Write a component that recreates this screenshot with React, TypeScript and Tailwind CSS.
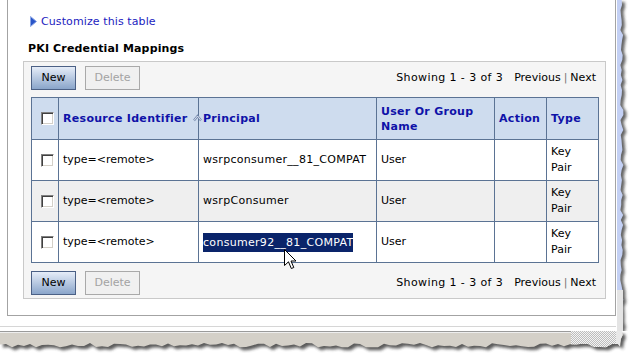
import React from 'react'

// simple seeded jitter for the torn paper edge
function jag(n: number, seed: number, lo: number, hi: number) {
  let s = seed
  const out: number[] = []
  for (let i = 0; i < n; i++) {
    s = (s * 9301 + 49297) % 233280
    out.push(lo + (s / 233280) * (hi - lo))
  }
  return out
}

function RightEdge() {
  const h = 331
  const xs = jag(Math.ceil(h / 5) + 1, 7, 4, 7.5)
  const pts = xs.map((x, i) => `${x.toFixed(1)},${Math.min(i * 5, h)}`).join(' L')
  const d = `M0,0 L${pts} L0,${h} Z`
  return (
    <svg width="22" height={h} className="block shrink-0">
      <defs>
        <filter id="rs" x="-50%" y="-10%" width="200%" height="120%">
          <feGaussianBlur stdDeviation="1.4" />
        </filter>
      </defs>
      <path d={d} transform="translate(3,2)" fill="#3a3a3a" opacity="0.8" filter="url(#rs)" />
      <path d={d} fill="#c3d0f4" />
      <rect x="0" y="0" width="1" height={h} fill="#ffffff" />
      <rect x="1" y="290" width="6" height={h - 290} fill="#e4e4e4" />
    </svg>
  )
}

function BottomEdge() {
  const xs = jag(Math.ceil(622 / 6) + 1, 3, 12, 16.5)
  const rs = jag(4, 11, 4, 7)
  let d = 'M0,0 L616,0'
  rs.forEach((x, i) => {
    d += ` L${(616 + x).toFixed(1)},${i * 4}`
  })
  for (let i = xs.length - 1; i >= 0; i--) {
    d += ` L${Math.min(i * 6, 620)},${xs[i].toFixed(1)}`
  }
  d += ' Z'
  return (
    <svg width="638" height="30" className="block">
      <defs>
        <filter id="bs" x="-10%" y="-50%" width="120%" height="250%">
          <feGaussianBlur stdDeviation="1.5" />
        </filter>
        <pattern id="dots" width="2" height="2" patternUnits="userSpaceOnUse">
          <rect width="2" height="2" fill="#f4f4f4" />
          <rect width="1" height="1" fill="#bdbdbd" />
          <rect x="1" y="1" width="1" height="1" fill="#bdbdbd" />
        </pattern>
        <clipPath id="bc">
          <path d={d} />
        </clipPath>
      </defs>
      <path d={d} transform="translate(3,3)" fill="#333" opacity="0.8" filter="url(#bs)" />
      <path d={d} fill="#d4d0c8" />
      <g clipPath="url(#bc)">
        <rect x="0" y="0" width="616" height="1" fill="#9a9a9a" />
        <rect x="0" y="1" width="616" height="1" fill="#eeeeee" />
        <rect x="571" y="0" width="45" height="30" fill="url(#dots)" />
        <rect x="616" y="0" width="10" height="30" fill="#e8e8e8" />
      </g>
    </svg>
  )
}

function Checkbox() {
  return (
    <div className="w-[13px] h-[13px] bg-white border border-t-[#808080] border-l-[#808080] border-b-[#ffffff] border-r-[#ffffff] shadow-[inset_1px_1px_0_#404040,inset_-1px_-1px_0_#d4d0c8]" />
  )
}

function Toolbar() {
  return (
    <div className="h-[24px] flex items-center justify-between">
      <div className="flex gap-[9px]">
        <button className="w-[45px] h-[24px] border border-[#4b6085] bg-gradient-to-b from-[#e6edf8] to-[#8aa5ca] text-black text-[11px]">
          New
        </button>
        <button className="w-[55px] h-[24px] border border-[#a9a9a9] bg-[#f0f0f0] text-[#a3a3a3] text-[11px]">
          Delete
        </button>
      </div>
      <div className="pr-[3px] flex items-center text-[11px] text-black whitespace-nowrap">
        <span className="tracking-[0.4px]">Showing 1 - 3 of 3</span>
        <span className="ml-[11px]">Previous</span>
        <span className="mx-[3px] text-[#777]">|</span>
        <span>Next</span>
      </div>
    </div>
  )
}

const rows = [
  { id: 'type=<remote>', principal: 'wsrpconsumer__81_COMPAT', who: 'User', bg: 'bg-white' },
  { id: 'type=<remote>', principal: 'wsrpConsumer', who: 'User', bg: 'bg-[#efefef]' },
  { id: 'type=<remote>', principal: 'consumer92__81_COMPAT', who: 'User', bg: 'bg-white', selected: true },
]

const cell = 'border-r border-b border-[#5b7394] flex items-center pl-[4px] whitespace-nowrap'
const head = 'border-r border-b border-[#5b7394] bg-[#cedcee] flex items-center pl-[4px] text-[#0f12a8] font-bold tracking-[0.3px] leading-[15px] whitespace-nowrap'

export default function App() {
  return (
    <div className="w-[638px] h-[361px] overflow-hidden bg-white font-['DejaVu_Sans',sans-serif] text-[11px] text-black">
      <div className="flex">
        <div className="w-[616px] h-[331px] flex flex-col">
          <div className="ml-[7px] w-[609px] h-[316px] border-l border-r border-b border-[#a3a3a3] flex flex-col">
            <div className="mt-[15px] ml-[22px] h-[13px] flex items-center">
              <svg width="7" height="11" viewBox="0 0 7 11">
                <path d="M0.5,0.5 L6.5,5.5 L0.5,10.5 Z" fill="#2a55c8" stroke="#8aa6e6" strokeWidth="1" />
              </svg>
              <span className="ml-[4px] text-[#1c1cc0] leading-[13px] tracking-[0.1px]">Customize this table</span>
            </div>
            <div className="mt-[14px] ml-[20px] font-bold tracking-[0.15px] leading-[14px]">PKI Credential Mappings</div>

            <div className="mt-[5px] ml-[15px] w-[583px] h-[238px] border border-[#c9c9c9] bg-[#f5f5f5] pl-[7px] pr-[6px] pt-[4px] flex flex-col">
              <Toolbar />

              <div className="mt-[7px] grid grid-cols-[27px_140px_178px_118px_52px_52px] grid-rows-[42px_41px_41px_41px] border-t border-l border-[#5b7394]">
                <div className={`${head} justify-center pl-0`}>
                  <Checkbox />
                </div>
                <div className={`${head} relative`}>
                  <span>Resource Identifier</span>
                  <svg width="9" height="8" viewBox="0 0 9 8" className="absolute left-[134px] top-[16px] z-10">
                    <path d="M1,6.5 L4.5,2 L8,6.5" fill="none" stroke="#7287ab" strokeWidth="2.2" />
                    <path d="M1,6.5 L4.5,2 L8,6.5" fill="none" stroke="#eef3fb" strokeWidth="0.8" />
                  </svg>
                </div>
                <div className={head}>Principal</div>
                <div className={head}>
                  <span>
                    User Or Group
                    <br />
                    Name
                  </span>
                </div>
                <div className={head}>Action</div>
                <div className={head}>Type</div>

                {rows.map((r, i) => (
                  <React.Fragment key={i}>
                    <div className={`${cell} ${r.bg} justify-center pl-0`}>
                      <Checkbox />
                    </div>
                    <div className={`${cell} ${r.bg}`}>{r.id}</div>
                    <div className={`${cell} ${r.bg} relative tracking-[0.3px]`}>
                      {r.selected ? (
                        <>
                          <span className="inline-block bg-[#0a246a] text-white leading-[19px]">{r.principal}</span>
                          <svg width="13" height="21" viewBox="0 0 13 21" className="absolute left-[85px] top-[27px]">
                            <path
                              d="M0.5,0.5 L0.5,16.5 L4.5,12.8 L7.3,19.5 L9.8,18.5 L7,12 L12,12 Z"
                              fill="#ffffff"
                              stroke="#000000"
                              strokeWidth="1"
                              strokeLinejoin="miter"
                            />
                          </svg>
                        </>
                      ) : (
                        r.principal
                      )}
                    </div>
                    <div className={`${cell} ${r.bg}`}>{r.who}</div>
                    <div className={`${cell} ${r.bg}`} />
                    <div className={`${cell} ${r.bg} leading-[16px]`}>
                      <span>
                        Key
                        <br />
                        Pair
                      </span>
                    </div>
                  </React.Fragment>
                ))}
              </div>

              <div className="mt-[8px]">
                <Toolbar />
              </div>
            </div>
          </div>
          <div className="mt-[10px] h-px bg-[#d6d6d6]" />
        </div>
        <RightEdge />
      </div>
      <BottomEdge />
    </div>
  )
}
